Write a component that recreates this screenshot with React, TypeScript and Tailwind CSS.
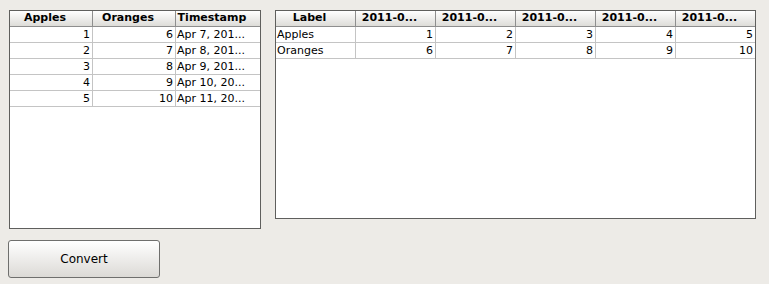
const leftCols = [
  { label: "Apples", w: "w-[83px]" },
  { label: "Oranges", w: "w-[83px]" },
  { label: "Timestamp", w: "flex-1" },
];

const leftRows = [
  ["1", "6", "Apr 7, 201..."],
  ["2", "7", "Apr 8, 201..."],
  ["3", "8", "Apr 9, 201..."],
  ["4", "9", "Apr 10, 20..."],
  ["5", "10", "Apr 11, 20..."],
];

const rightRows = [
  ["Apples", "1", "2", "3", "4", "5"],
  ["Oranges", "6", "7", "8", "9", "10"],
];

function HeaderCell({ label, className }: { label: string; className: string }) {
  return (
    <div
      className={`${className} h-full flex items-center justify-center pr-[12px] overflow-hidden whitespace-nowrap border-r border-[#8e8e8e] last:border-r-0 bg-gradient-to-b from-white to-[#dddcd8] font-bold`}
    >
      {label}
    </div>
  );
}

export default function App() {
  return (
    <div
      className="w-[769px] h-[284px] bg-[#edebe7] relative text-[11px] text-black"
      style={{ fontFamily: '"DejaVu Sans", sans-serif' }}
    >
      <div className="flex items-start pt-[10px] pl-[9px] gap-[14px]">
        <div className="flex flex-col gap-[11px]">
          {/* left table */}
          <div className="w-[252px] h-[219px] border border-[#5f5f5d] bg-white flex flex-col">
            <div className="h-[16px] flex border-b border-[#8e8e8e]">
              {leftCols.map((c) => (
                <HeaderCell key={c.label} label={c.label} className={c.w} />
              ))}
            </div>
            {leftRows.map((r, i) => (
              <div key={i} className="h-[16px] flex border-b border-[#c4c4c4]">
                <div className="w-[83px] border-r border-[#c4c4c4] text-right pr-[2px] leading-[15px]">{r[0]}</div>
                <div className="w-[83px] border-r border-[#c4c4c4] text-right pr-[2px] leading-[15px]">{r[1]}</div>
                <div className="flex-1 pl-[1px] leading-[15px] overflow-hidden whitespace-nowrap">{r[2]}</div>
              </div>
            ))}
          </div>
          <button className="ml-[-1px] w-[152px] h-[38px] rounded-[3px] border border-[#6f6f6d] bg-gradient-to-b from-white to-[#dcdad6] text-[12px]">
            Convert
          </button>
        </div>

        {/* right table */}
        <div className="w-[481px] h-[209px] border border-[#5f5f5d] bg-white flex flex-col">
          <div className="h-[16px] flex border-b border-[#8e8e8e]">
            <HeaderCell label="Label" className="w-[80px]" />
            <HeaderCell label="2011-0..." className="w-[80px]" />
            <HeaderCell label="2011-0..." className="w-[80px]" />
            <HeaderCell label="2011-0..." className="w-[80px]" />
            <HeaderCell label="2011-0..." className="w-[80px]" />
            <HeaderCell label="2011-0..." className="flex-1" />
          </div>
          {rightRows.map((r, i) => (
            <div key={i} className="h-[16px] flex border-b border-[#c4c4c4]">
              <div className="w-[80px] border-r border-[#c4c4c4] pl-[1px] leading-[15px]">{r[0]}</div>
              {r.slice(1).map((v, j) => (
                <div
                  key={j}
                  className={`${j === 4 ? "flex-1" : "w-[80px] border-r border-[#c4c4c4]"} text-right pr-[2px] leading-[15px]`}
                >
                  {v}
                </div>
              ))}
            </div>
          ))}
        </div>
      </div>
    </div>
  );
}
